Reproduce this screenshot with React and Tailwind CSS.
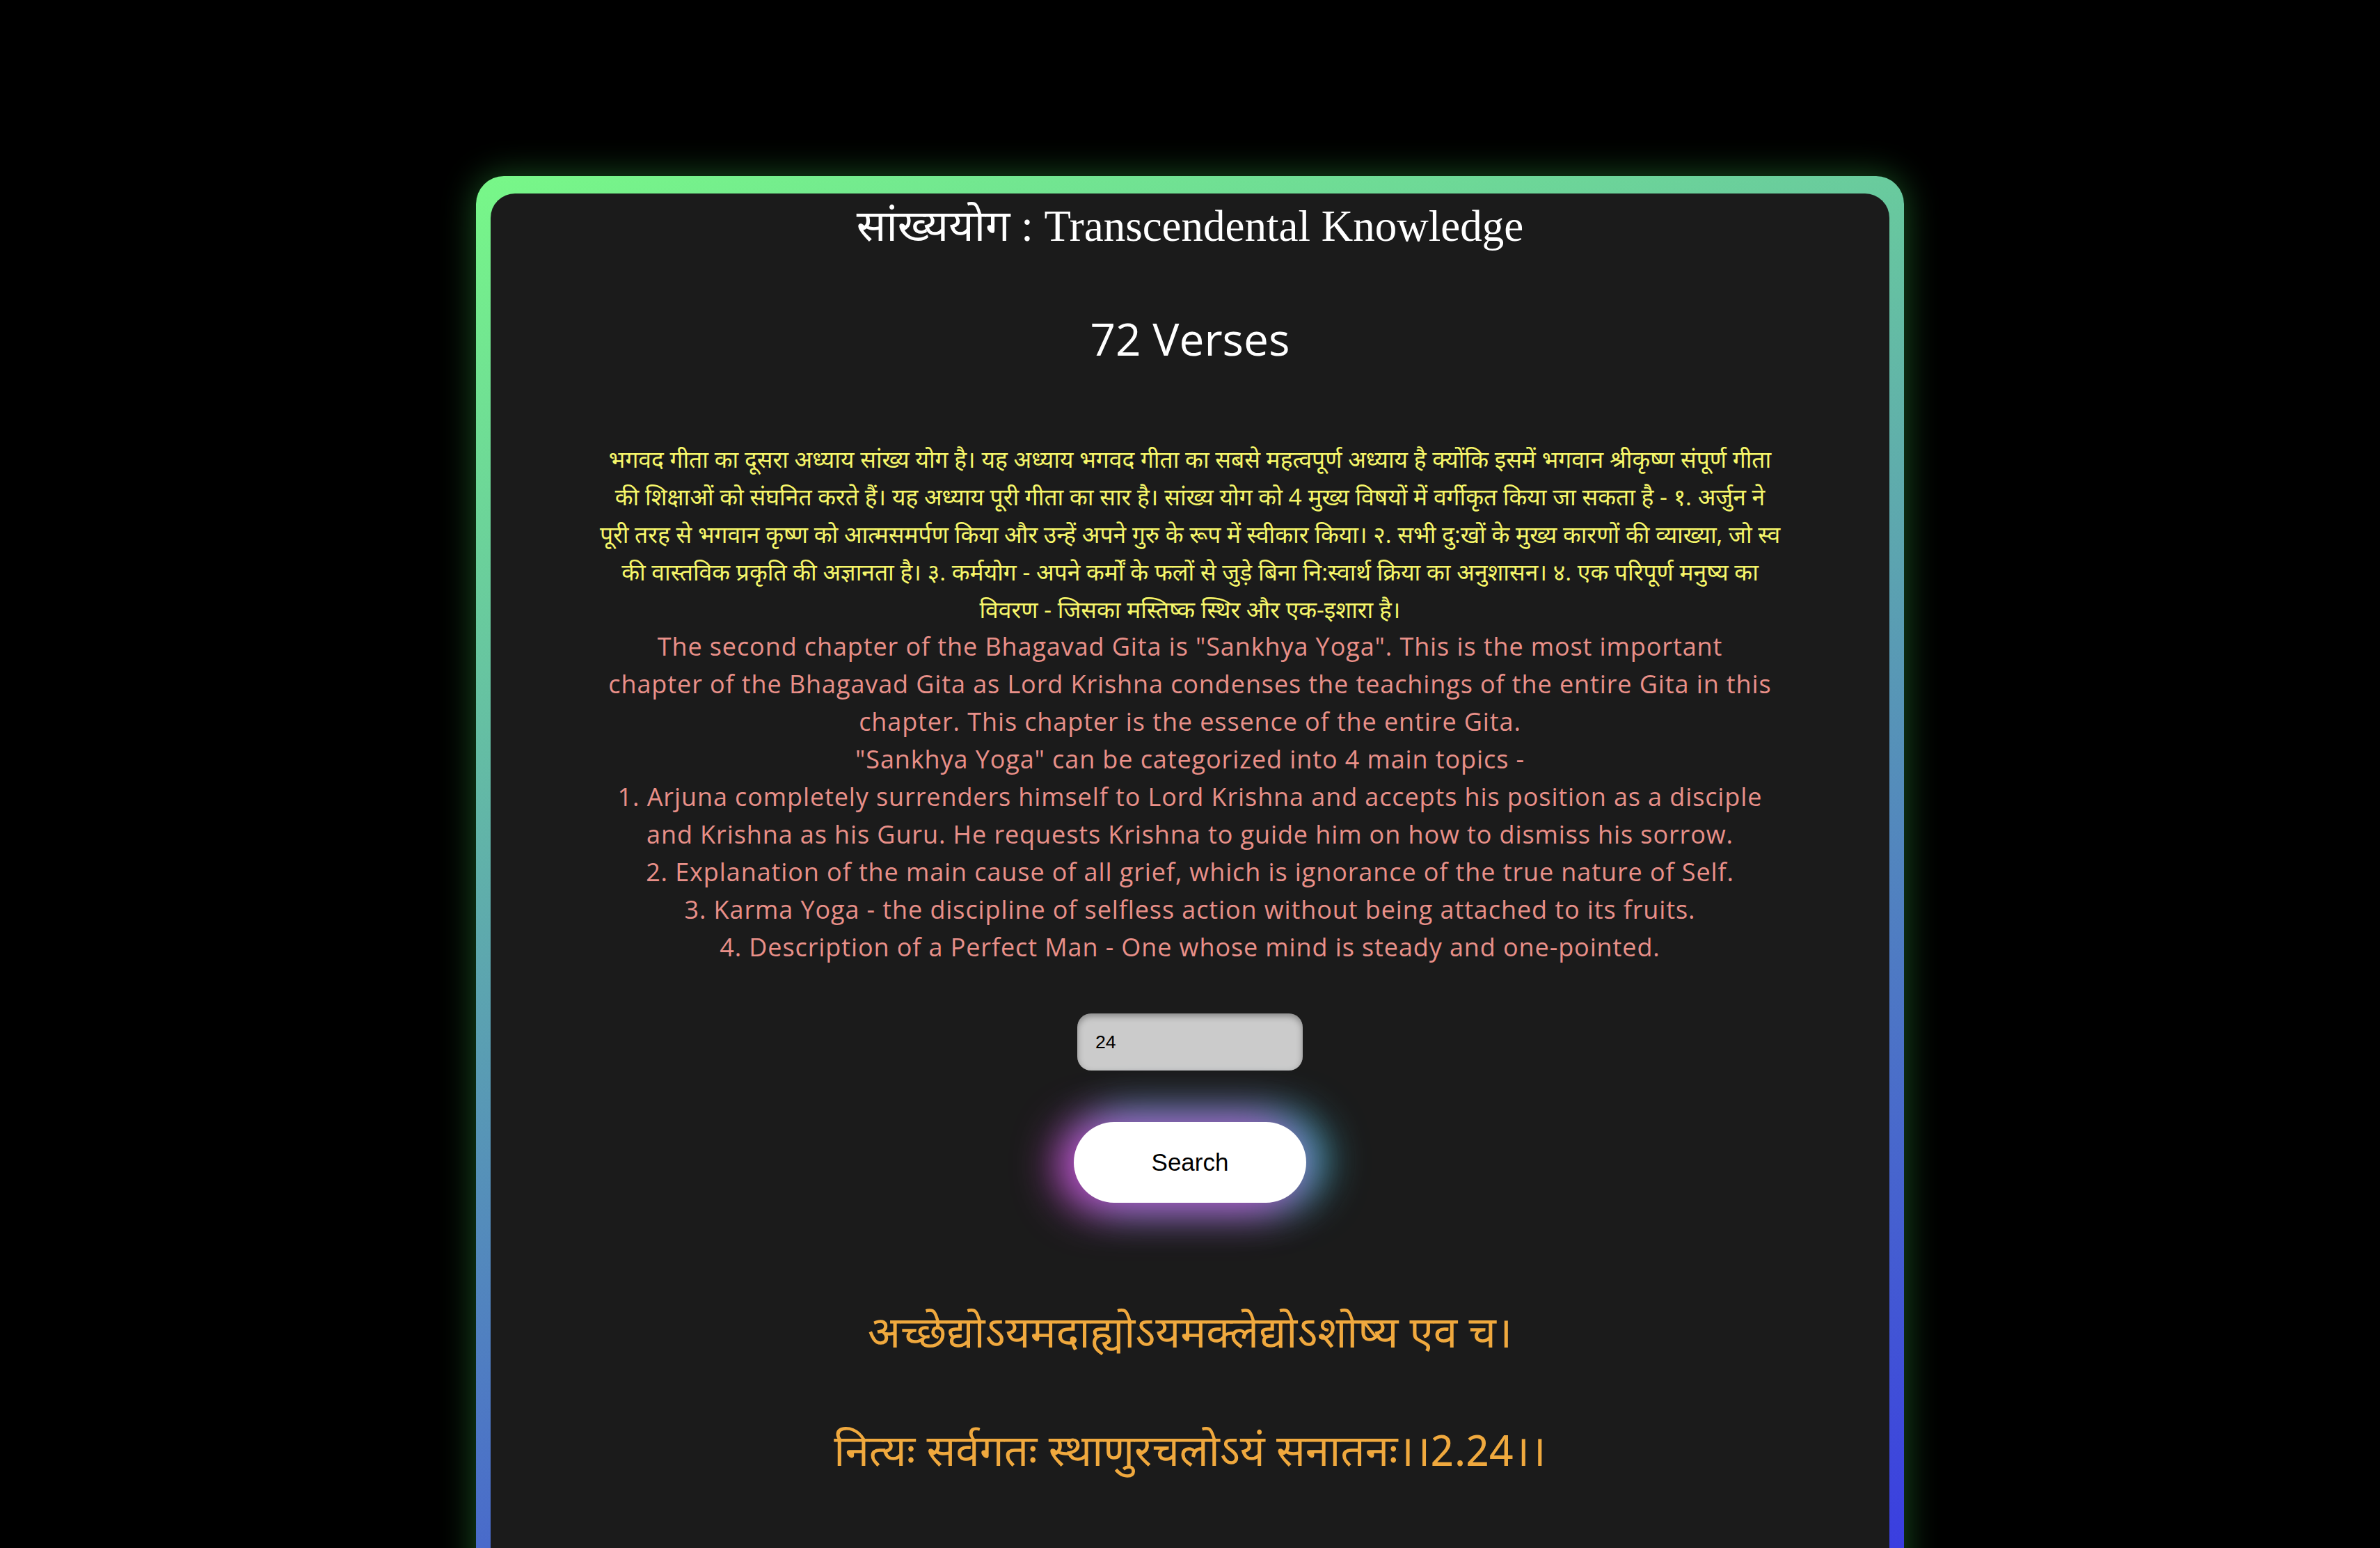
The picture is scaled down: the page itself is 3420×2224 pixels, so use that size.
import { useState } from 'react'

const hindi = [
  'भगवद गीता का दूसरा अध्याय सांख्य योग है। यह अध्याय भगवद गीता का सबसे महत्वपूर्ण अध्याय है क्योंकि इसमें भगवान श्रीकृष्ण संपूर्ण गीता',
  'की शिक्षाओं को संघनित करते हैं। यह अध्याय पूरी गीता का सार है। सांख्य योग को 4 मुख्य विषयों में वर्गीकृत किया जा सकता है - १. अर्जुन ने',
  'पूरी तरह से भगवान कृष्ण को आत्मसमर्पण किया और उन्हें अपने गुरु के रूप में स्वीकार किया। २. सभी दु:खों के मुख्य कारणों की व्याख्या, जो स्व',
  'की वास्तविक प्रकृति की अज्ञानता है। ३. कर्मयोग - अपने कर्मों के फलों से जुड़े बिना नि:स्वार्थ क्रिया का अनुशासन। ४. एक परिपूर्ण मनुष्य का',
  'विवरण - जिसका मस्तिष्क स्थिर और एक-इशारा है।',
]

const english = [
  'The second chapter of the Bhagavad Gita is "Sankhya Yoga". This is the most important',
  'chapter of the Bhagavad Gita as Lord Krishna condenses the teachings of the entire Gita in this',
  'chapter. This chapter is the essence of the entire Gita.',
  '"Sankhya Yoga" can be categorized into 4 main topics -',
  '1. Arjuna completely surrenders himself to Lord Krishna and accepts his position as a disciple',
  'and Krishna as his Guru. He requests Krishna to guide him on how to dismiss his sorrow.',
  '2. Explanation of the main cause of all grief, which is ignorance of the true nature of Self.',
  '3. Karma Yoga - the discipline of selfless action without being attached to its fruits.',
  '4. Description of a Perfect Man - One whose mind is steady and one-pointed.',
]

export default function App() {
  const [verse, setVerse] = useState('24')

  return (
    <div className="min-h-screen bg-black pt-[253px] pb-[120px]">
      <div className="w-[60%] mx-auto rounded-[40px] pt-[25px] px-[21px] bg-[linear-gradient(163deg,#78f888_0px,#3a3ee0_2480px)] shadow-[0_0_50px_0_#1a5422]">
        <div className="bg-[#1b1b1b] rounded-t-[35px] pt-[10px] pb-[260px] flex flex-col items-center text-center">
          <h1 className="text-white text-[63px] leading-[74px] font-['Liberation_Serif','Noto_Sans_Devanagari',serif]">
            सांख्ययोग : Transcendental Knowledge
          </h1>
          <h2 className="mt-[77px] text-white text-[64px] leading-[96px] font-['Open_Sans','Noto_Sans_Devanagari',sans-serif]">
            72 Verses
          </h2>
          <div className="mt-[97px] text-[36px] leading-[54px] font-['Open_Sans','Noto_Sans_Devanagari',sans-serif]">
            {hindi.map((l, i) => (
              <div key={i} className="text-[#f6f66a] whitespace-nowrap text-[33.6px]">{l}</div>
            ))}
            {english.map((l, i) => (
              <div key={i} className="text-[#e99089] whitespace-nowrap tracking-[0.9px]">{l}</div>
            ))}
          </div>
          <input
            className="mt-[68px] w-[324px] h-[82px] rounded-[20px] bg-[#cbcbcb] pl-[26px] text-[26.67px] text-black outline-none shadow-[inset_0_4px_10px_rgba(0,0,0,0.35)] font-['Liberation_Sans',Arial,sans-serif]"
            value={verse}
            onChange={e => setVerse(e.target.value)}
          />
          <button className="mt-[74px] w-[334px] h-[116px] rounded-full bg-white text-black text-[35px] font-['Liberation_Sans',Arial,sans-serif] shadow-[-18px_4px_60px_8px_rgba(210,70,210,0.85),18px_-4px_60px_8px_rgba(70,200,220,0.85)]">
            Search
          </button>
          <p className="mt-[153px] text-[#f0a93e] text-[62px] leading-[80px] font-['Noto_Sans_Devanagari','Noto_Sans',sans-serif]">
            अच्छेद्योऽयमदाह्योऽयमक्लेद्योऽशोष्य एव च।
          </p>
          <p className="mt-[90px] text-[#f0a93e] text-[62px] leading-[80px] font-['Noto_Sans_Devanagari','Noto_Sans',sans-serif]">
            नित्यः सर्वगतः स्थाणुरचलोऽयं सनातनः।।2.24।।
          </p>
        </div>
      </div>
    </div>
  )
}
